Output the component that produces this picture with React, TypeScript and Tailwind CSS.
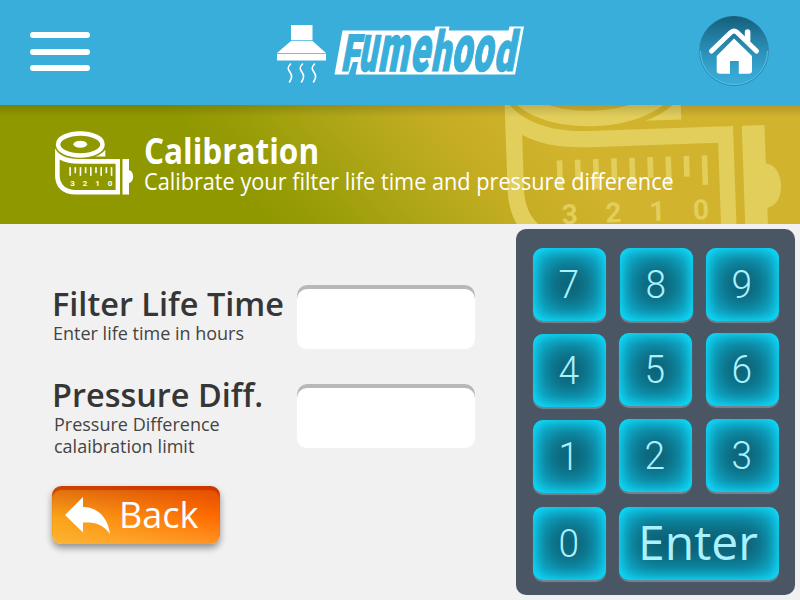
import React from "react";

function HoodLogo() {
  const letters = [
    { c: "F", x: 340.5, w: 18, sy: 1.6 },
    { c: "u", x: 358, w: 18, sy: 2.1 },
    { c: "m", x: 377.500, w: 30, sy: 2.06 },
    { c: "e", x: 409.500, w: 19, sy: 2.02 },
    { c: "h", x: 430.500, w: 19.500, sy: 1.75 },
    { c: "o", x: 451, w: 20, sy: 2.04 },
    { c: "o", x: 472, w: 20, sy: 2.04 },
    { c: "d", x: 493.500, w: 20.500, sy: 1.75 },
  ];
  return (
    <svg width="250" height="66" viewBox="276 22 250 66" aria-label="Fumehood">
      <g fill="#fff">
        <path d="M291 25h21.500v15.300h-21.500z" />
        <path d="M291 41h21.500l13.500 12h-49z" />
        <path d="M277 53.800h49v6.700h-49z" />
      </g>
      <g fill="none" stroke="#fff" strokeWidth="1.600" strokeLinecap="round">
        <path d="M290.500 64c-4 4-2 6 0 9s1 6-1 9" />
        <path d="M302.500 64c-4 4-2 6 0 9s1 6-1 9" />
        <path d="M314.500 64c-4 4-2 6 0 9s1 6-1 9" />
      </g>
      <path
        fill="#fff"
        d="M342.500 30.500H434.500l1-4h14l-.7 4H508.500l1-4H524L515 74.500H355.500l2.500-12.500h-5L348.500 74.500H334.500z"
      />
      <g fill="#39aeda" stroke="#39aeda" strokeWidth="0.700" fontFamily="'Liberation Sans Narrow', Roboto, sans-serif" fontWeight="900" fontSize="32">
        {letters.map((l, i) => (
          <text
            key={i}
            transform={`translate(${l.x} 70.600) skewX(-10.500) scale(1 ${l.sy})`}
            textLength={l.w}
            lengthAdjust="spacingAndGlyphs"
          >
            {l.c}
          </text>
        ))}
      </g>
    </svg>
  );
}

function TapeShape({ color }: { color: string }) {
  const ticks = [0, 1, 2, 3, 4, 5, 6, 7, 8];
  return (
    <g fill={color}>
      <ellipse cx="80.300" cy="144.400" rx="22.200" ry="11" fill="none" stroke={color} strokeWidth="4.500" />
      <ellipse cx="80.300" cy="144.300" rx="6.900" ry="3.500" />
      <path d="M105.300 149.800v6.800H95q6.500-2 10.300-6.800z" />
      <path
        fillRule="evenodd"
        d="M55 148.500C58.500 155 67 159 79 159H120V194.500H76C62 194.500 55 187 55 175zM59.700 159.500V175.500C59.700 184.500 66 190 76 190H115.600V163.700H79C71 163.700 65 162.500 59.700 159.500z"
      />
      <path d="M122.500 159h6.500v11.200c5.500.5 5.500 12.300 0 12.800v11.500h-6.500z" />
      {ticks.map((t) => (
        <rect key={t} x={69.300 + t * 5.180} y="167.200" width="1.600" height={t % 2 ? 6 : 8.600} />
      ))}
      <g fontFamily="Roboto, sans-serif" fontWeight="700" fontSize="8" textAnchor="middle">
        <text x="72.500" y="185.700">3</text>
        <text x="85" y="185.700">2</text>
        <text x="97.500" y="185.700">1</text>
        <text x="110" y="185.700">0</text>
      </g>
    </g>
  );
}

function HomeIcon() {
  return (
    <svg width="72" height="72" viewBox="698 15 72 72">
      <defs>
        <linearGradient id="home" x1="0" y1="0" x2="0" y2="1">
          <stop offset="0" stopColor="#155e7b" />
          <stop offset="0.350" stopColor="#2583a8" />
          <stop offset="0.800" stopColor="#36a6d1" />
          <stop offset="1" stopColor="#39aeda" />
        </linearGradient>
        <linearGradient id="ring" x1="0" y1="0" x2="0" y2="1">
          <stop offset="0" stopColor="#175f7c" />
          <stop offset="0.500" stopColor="#3590b4" />
          <stop offset="1" stopColor="#2787ac" />
        </linearGradient>
      </defs>
      <circle cx="734" cy="51" r="34.500" fill="url(#home)" stroke="url(#ring)" />
      <path d="M700.500 51a33.500 33.500 0 0 0 67 0" fill="none" stroke="#55c0e8" strokeWidth="1" />
      <path d="M711.500 51L731 32.300q3-2.600 6 0L756.500 51" fill="none" stroke="#fff" strokeWidth="5" strokeLinecap="round" strokeLinejoin="round" />
      <path d="M747.600 32v8" stroke="#fff" strokeWidth="5.600" strokeLinecap="round" />
      <path d="M734 38.500L752 56V70.500q0 3.300-3.300 3.300H738.800V61H730V73.800H720q-3.300 0-3.300-3.300V56z" fill="#fff" />
    </svg>
  );
}

function Key({ label, className = "" }: { label: string; className?: string }) {
  return (
    <button
      className={`flex h-[73px] w-[73px] items-center justify-center rounded-[10px] bg-[#0d6074] pt-px font-['Roboto',sans-serif] text-[39px] font-light leading-none text-[#a9f1ff] shadow-[inset_0_0_12px_#10e4ff,inset_0_0_30px_6px_#10d4fa,0_2px_1px_#768391] ${className}`}
    >
      <span className="-translate-x-px scale-x-95">{label}</span>
    </button>
  );
}

function Field({ title, hint, className, titleClass, hintClass }: { title: string; hint: React.ReactNode; className: string; titleClass: string; hintClass: string }) {
  return (
    <div className={`flex items-start ${className}`}>
      <div className="w-[245px] whitespace-nowrap pt-px text-[#363636]">
        <h2 className={`w-max origin-left scale-x-[1.014] text-[32px] font-semibold leading-[36px] ${titleClass}`}>{title}</h2>
        <p className={`w-max origin-left text-[18px] leading-[22px] text-[#444] ${hintClass}`}>{hint}</p>
      </div>
      <input className="h-16 w-[178px] rounded-[10px] bg-white shadow-[inset_0_4px_0_#b8b8b8,0_0_2px_#f8f8f8] outline-none" />
    </div>
  );
}

export default function App() {
  return (
    <div className="flex h-[600px] w-[800px] flex-col overflow-hidden bg-[#f1f1f1] font-['Open_Sans',sans-serif]">
      <header className="flex h-[105px] shrink-0 items-start bg-[#39aeda]">
        <button className="ml-[30px] mt-8 flex w-[60px] flex-col gap-[10.500px]" aria-label="Menu">
          <span className="h-[6px] w-full rounded-full bg-white" />
          <span className="h-[6px] w-full rounded-full bg-white" />
          <span className="h-[6px] w-full rounded-full bg-white" />
        </button>
        <div className="ml-[186px] mt-[22px]">
          <HoodLogo />
        </div>
        <button className="ml-[172px] mt-[15px]" aria-label="Home">
          <HomeIcon />
        </button>
      </header>

      <section className="relative flex h-[119px] shrink-0 overflow-hidden bg-[linear-gradient(48deg,#909800_30%,#9a9d08_37%,#b1a719_49%,#c3ac22_57%,#d2b32d_70%)]">
        <svg className="absolute inset-0" width="800" height="119" viewBox="0 105 800 119">
          <g transform="translate(733 126) rotate(-2) scale(3.500 3.450) translate(-120 -159)">
            <TapeShape color="#e2ce5b" />
          </g>
        </svg>
        <div className="absolute inset-x-0 top-0 h-3 bg-gradient-to-b from-black/15 to-transparent" />
        <svg className="relative ml-[54px] mt-[25px] shrink-0" width="80" height="66" viewBox="54 130 80 66">
          <TapeShape color="#fff" />
        </svg>
        <div className="relative ml-[10px] mt-[26px] whitespace-nowrap text-white">
          <h1 className="w-max origin-left scale-x-[0.900] text-[35px] font-bold leading-[40px]">Calibration</h1>
          <p className="-mt-[3px] w-max origin-left scale-x-[0.904] text-[24px] leading-[26px]">
            Calibrate your filter life time and pressure difference
          </p>
        </div>
      </section>

      <main className="flex flex-1">
        <div className="w-[516px] pl-[52px] pt-[61px]">
          <Field title="Filter Life Time" hint="Enter life time in hours" className="h-[99px]" titleClass="" hintClass="ml-px" />
          <Field
            title="Pressure Diff."
            hint={<>Pressure Difference<br />calaibration limit</>}
            className="h-[102px]"
            titleClass="-mt-[8px]"
            hintClass="ml-[2px]"
          />
          <button className="flex h-[58px] w-[168px] items-center rounded-[9px] bg-[linear-gradient(to_bottom,rgba(190,35,0,0.450),transparent_55%,rgba(255,200,80,0.450)),linear-gradient(to_right,#faa51a,#ff6a00)] text-[36px] leading-none text-white shadow-[inset_0_4px_1px_rgba(190,40,0,0.600),0_4px_7px_rgba(0,0,0,0.400)]">
            <svg className="ml-[13px] shrink-0" width="46" height="38" viewBox="65 496 46 38">
              <path d="M65 515L83 497V507C98 507 108 518 110 534C103 524 95 522 83 522.500V532.500z" fill="#fff" />
            </svg>
            <span className="ml-[8px]">Back</span>
          </button>
        </div>

        <div className="mt-[5px] grid h-[366px] w-[279px] grid-cols-[86px_87px_73px] grid-rows-[85px_86px_88px_73px] rounded-[10px] bg-[#4a5664] pl-[17px] pt-[19px]">
          <Key label="7" />
          <Key label="8" className="ml-px" />
          <Key label="9" />
          <Key label="4" className="mt-px" />
          <Key label="5" />
          <Key label="6" />
          <Key label="1" className="mt-px" />
          <Key label="2" />
          <Key label="3" />
          <Key label="0" />
          <button className="col-span-2 flex h-[73px] w-[160px] items-center justify-center rounded-[10px] bg-[#0d6074] pb-[3px] pr-[2px] text-[48px] leading-none text-[#a9f1ff] shadow-[inset_0_0_12px_#10e4ff,inset_0_0_30px_6px_#10d4fa,0_2px_1px_#768391]">
            Enter
          </button>
        </div>
      </main>
    </div>
  );
}
